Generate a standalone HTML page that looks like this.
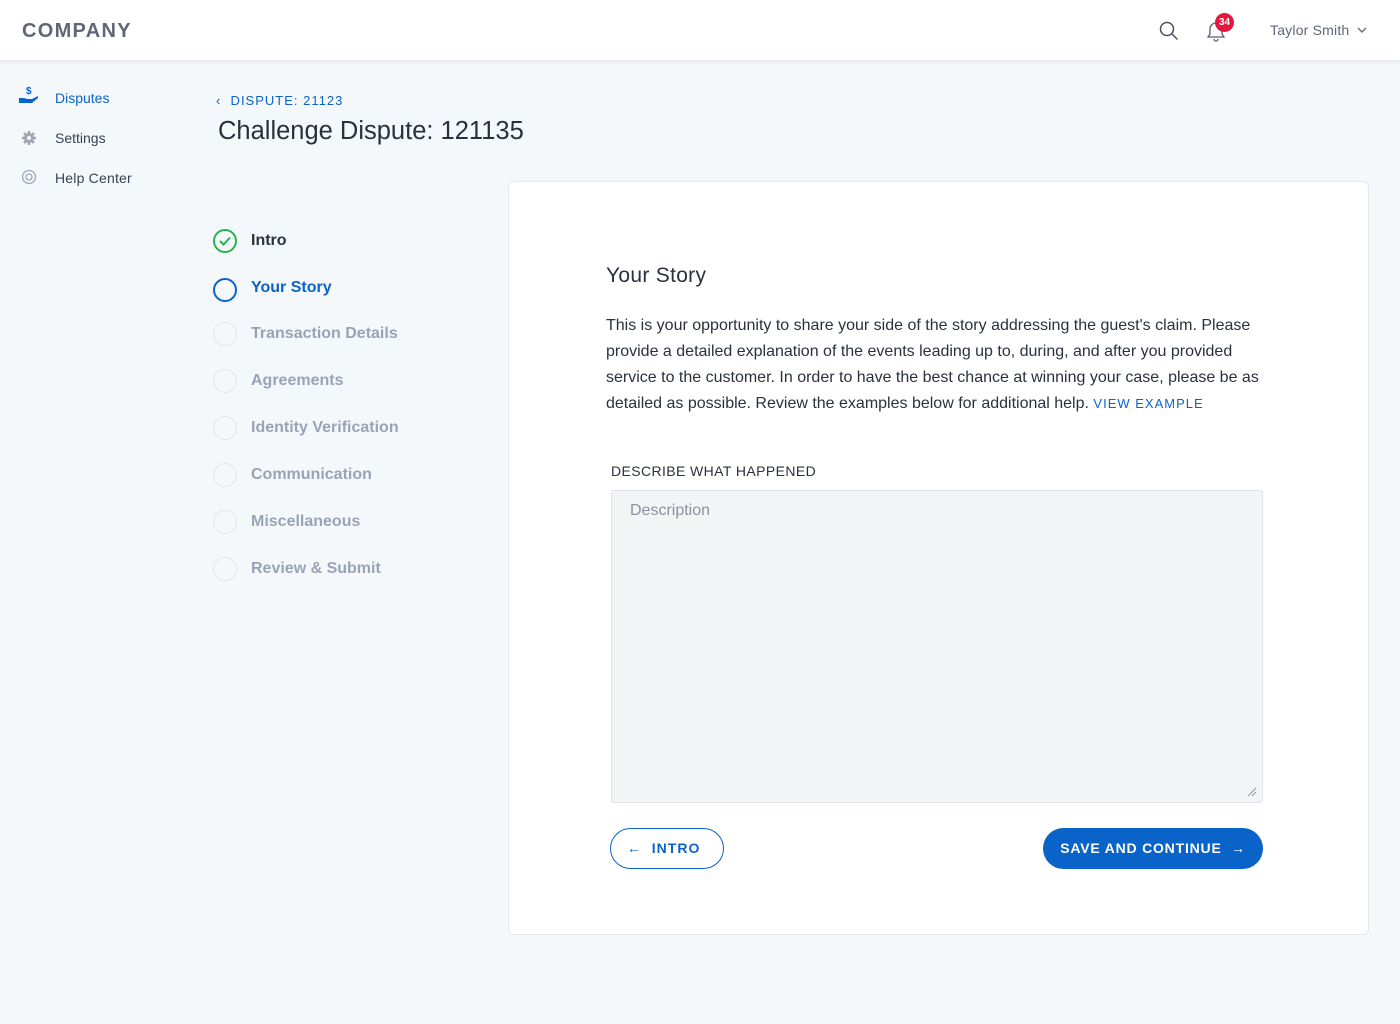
<!DOCTYPE html>
<html><head><meta charset="utf-8"><style>
*{box-sizing:border-box;margin:0;padding:0}
body{width:1400px;height:1024px;background:#f5f8fb;font-family:"Liberation Sans",sans-serif;position:relative;overflow:hidden}
.hdr{position:absolute;left:0;top:0;width:1400px;height:60px;background:#fff;box-shadow:0 2px 6px rgba(0,0,0,.08)}
.logo{position:absolute;left:22px;top:20px;font-size:20px;font-weight:bold;letter-spacing:1.3px;color:#5f6677}
.abs{position:absolute}
.nav{position:absolute;left:55px;font-size:14px;color:#3a4251}
.step{position:absolute;left:213px;height:24px}
.step .c{position:absolute;left:0;top:0;width:24px;height:24px;border-radius:50%;border:1.5px solid #e2e6ea}
.step .t{position:absolute;left:38px;top:3px;font-size:16px;font-weight:bold;color:#9aa3b5;white-space:nowrap}
.card{position:absolute;left:508px;top:181px;width:861px;height:754px;background:#fff;border:1px solid #e3e7ec;border-radius:6px}
</style></head><body>
<div class="hdr">
<div class="logo">COMPANY</div>
<svg class="abs" style="left:1159px;top:21px" width="20" height="20" viewBox="0 0 20 20" fill="none" stroke="#4a5060" stroke-width="1.5"><circle cx="8" cy="8" r="6.5"/><path d="M13 13l5.5 5.5"/></svg>
<svg class="abs" style="left:1205px;top:20px" width="22" height="22" viewBox="0 0 22 22" fill="none" stroke="#5a6070" stroke-width="1.3"><path d="M3 17h16l-2-3v-5a6 6 0 0 0-12 0v5z"/><path d="M9 19a2 2 0 0 0 4 0"/></svg>
<div class="abs" style="left:1215px;top:13px;width:19px;height:19px;border-radius:50%;background:#e4173e;color:#fff;font-size:10px;font-weight:bold;text-align:center;line-height:19px">34</div>
<div class="abs" style="left:1270px;top:22px;font-size:14px;color:#5f6677;letter-spacing:.2px">Taylor Smith</div>
<svg class="abs" style="left:1357px;top:26px" width="10" height="8" viewBox="0 0 10 8" fill="none" stroke="#6a7080" stroke-width="1.5"><path d="M1 2l4 4 4-4"/></svg>
</div>
<svg class="abs" style="left:19px;top:85px" width="20" height="20" viewBox="0 0 20 20"><text x="7" y="9" font-size="10" font-weight="bold" fill="#0a63c9" font-family="Liberation Sans">$</text><path d="M0 13h5l3 1h5l6-3v2l-6 5H0z" fill="#0a63c9"/></svg>
<div class="nav" style="top:90px;color:#0a63c9">Disputes</div>
<svg class="abs" style="left:21px;top:130px" width="16" height="16" viewBox="0 0 16 16"><circle cx="8" cy="8" r="5" fill="#a0a7b4"/><path d="M8 1v14M1 8h14M3 3l10 10M13 3L3 13" stroke="#a0a7b4" stroke-width="2.5"/><circle cx="8" cy="8" r="2" fill="#f5f8fb"/></svg>
<div class="nav" style="top:130px">Settings</div>
<svg class="abs" style="left:21px;top:169px" width="16" height="16" viewBox="0 0 16 16" fill="none" stroke="#a0a7b4" stroke-width="1.3"><circle cx="8" cy="8" r="6.5"/><circle cx="8" cy="8" r="3"/></svg>
<div class="nav" style="top:170px;letter-spacing:.2px">Help Center</div>
<div class="abs" style="left:216px;top:93px;font-size:13px;color:#0a63c9;letter-spacing:1px">‹&nbsp; DISPUTE: 21123</div>
<div class="abs" style="left:218px;top:117px;font-size:25.5px;color:#2a313d">Challenge Dispute: 121135</div>
<div class="step" style="top:229px"><div class="c" style="border:2px solid #2bb24c"></div><svg class="abs" style="left:6px;top:7px" width="12" height="10" viewBox="0 0 12 10" fill="none" stroke="#2bb24c" stroke-width="2"><path d="M1 5l3.5 3.5L11 1.5"/></svg><div class="t" style="color:#2a313d">Intro</div></div>
<div class="step" style="top:278px"><div class="c" style="border:2px solid #0a63c9"></div><div class="t" style="color:#0a63c9;top:1px">Your Story</div></div>
<div class="step" style="top:322px"><div class="c"></div><div class="t">Transaction Details</div></div>
<div class="step" style="top:369px"><div class="c"></div><div class="t">Agreements</div></div>
<div class="step" style="top:416px"><div class="c"></div><div class="t">Identity Verification</div></div>
<div class="step" style="top:463px"><div class="c"></div><div class="t">Communication</div></div>
<div class="step" style="top:510px"><div class="c"></div><div class="t">Miscellaneous</div></div>
<div class="step" style="top:557px"><div class="c"></div><div class="t">Review &amp; Submit</div></div>
<div class="card">
<div class="abs" style="left:97px;top:82px;font-size:21px;color:#2a313d;letter-spacing:.3px">Your Story</div>
<div class="abs" style="left:97px;top:131px;width:680px;font-size:16px;line-height:26px;color:#2a313d">This is your opportunity to share your side of the story addressing the guest's claim. Please provide a detailed explanation of the events leading up to, during, and after you provided service to the customer. In order to have the best chance at winning your case, please be as detailed as possible. Review the examples below for additional help. <span style="font-size:13px;color:#0a63c9;letter-spacing:1px">VIEW EXAMPLE</span></div>
<div class="abs" style="left:102px;top:281px;font-size:14px;color:#2a313d;letter-spacing:.4px">DESCRIBE WHAT HAPPENED</div>
<div class="abs" style="left:102px;top:308px;width:652px;height:313px;background:#f3f4f6;border:1px solid #dfe3e8;border-radius:3px"><div class="abs" style="left:18px;top:11px;font-size:16px;color:#8a92a2">Description</div>
<svg class="abs" style="right:5px;bottom:5px" width="10" height="10" viewBox="0 0 10 10" stroke="#8a92a2"><path d="M1 9L9 1M5 9L9 5"/></svg></div>
<div class="abs" style="left:101px;top:646px;width:114px;height:41px;border:1px solid #0a63c9;border-radius:21px;color:#0a63c9;font-size:14px;font-weight:bold;letter-spacing:1px;line-height:39px;padding-left:16px">←&nbsp; INTRO</div>
<div class="abs" style="left:534px;top:646px;width:220px;height:41px;background:#0a63c9;border-radius:21px;color:#fff;font-size:14px;font-weight:bold;letter-spacing:.8px;line-height:41px;text-align:center">SAVE AND CONTINUE &nbsp;→</div>
</div>
</body></html>
